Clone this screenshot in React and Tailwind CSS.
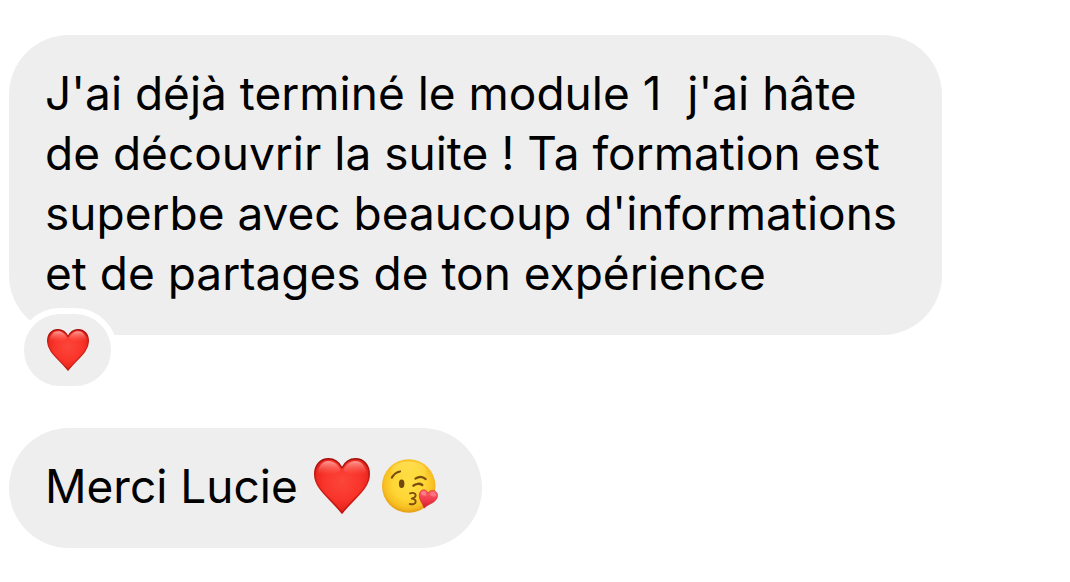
import React from 'react';

const MESSAGES = [
    {
        id: 1,
        text: "J'ai déjà terminé le module 1  j'ai hâte de découvrir la suite ! Ta formation est superbe avec beaucoup d'informations et de partages de ton expérience",
        reaction: true,
    },
    { id: 2, text: 'Merci Lucie', emojis: true },
];

function HeartEmoji({ id, className }) {
    return (
        <svg viewBox="0 0 56 56" className={className} role="img" aria-label="Cœur rouge">
            <defs>
                <radialGradient id={`${id}-fill`} cx="0.5" cy="0.42" r="0.6">
                    <stop offset="0" stopColor="#fb463c" />
                    <stop offset="0.55" stopColor="#fa352b" />
                    <stop offset="0.85" stopColor="#e9261d" />
                    <stop offset="1" stopColor="#cc1711" />
                </radialGradient>
                <linearGradient id={`${id}-edge`} x1="0" y1="0" x2="0" y2="1">
                    <stop offset="0" stopColor="#a3100c" />
                    <stop offset="0.5" stopColor="#d3211a" />
                    <stop offset="1" stopColor="#c0150f" />
                </linearGradient>
                <linearGradient id={`${id}-shine`} x1="0" y1="0" x2="0" y2="1">
                    <stop offset="0" stopColor="#ffb9b2" stopOpacity="0.8" />
                    <stop offset="1" stopColor="#ff6a60" stopOpacity="0" />
                </linearGradient>
            </defs>
            <path
                d="M28 10C25 4 20 .8 14.500 .8C6.500 .8 .8 7 .8 16C.8 31 16 39.500 28 55C40 39.500 55.200 31 55.200 16C55.200 7 49.500 .8 41.500 .8C36 .8 31 4 28 10Z"
                fill={`url(#${id}-fill)`}
                stroke={`url(#${id}-edge)`}
                strokeWidth="1.600"
                strokeLinejoin="round"
            />
            <path d="M3.500 15C4.500 7.500 9 3 14.500 3C20 3 24 6.500 26.500 12.500C20 18 9 18 3.500 15Z" fill={`url(#${id}-shine)`} />
            <path d="M29.500 12.500C32 6.500 36 3 41.500 3C47 3 51.500 7.500 52.500 15C47 18 36 18 29.500 12.500Z" fill={`url(#${id}-shine)`} />
        </svg>
    );
}

function KissEmoji({ className }) {
    return (
        <svg viewBox="0 0 57 56" className={className} role="img" aria-label="Visage envoyant un bisou">
            <defs>
                <radialGradient id="kiss-face" cx="0.5" cy="0.45" r="0.56">
                    <stop offset="0" stopColor="#ffe045" />
                    <stop offset="0.55" stopColor="#fed534" />
                    <stop offset="0.82" stopColor="#f8bf22" />
                    <stop offset="1" stopColor="#e29a15" />
                </radialGradient>
                <linearGradient id="kiss-shine" x1="0" y1="0" x2="0" y2="1">
                    <stop offset="0" stopColor="#ffec70" stopOpacity="0.6" />
                    <stop offset="1" stopColor="#ffe04a" stopOpacity="0" />
                </linearGradient>
                <linearGradient id="kiss-heart" x1="0" y1="0" x2="0" y2="1">
                    <stop offset="0" stopColor="#fb6570" />
                    <stop offset="0.55" stopColor="#f23a4b" />
                    <stop offset="1" stopColor="#cf1f31" />
                </linearGradient>
            </defs>
            <circle cx="27.200" cy="28" r="27.200" fill="url(#kiss-face)" />
            <ellipse cx="27.200" cy="12.500" rx="18" ry="9.500" fill="url(#kiss-shine)" />
            <ellipse cx="20" cy="25.700" rx="2.800" ry="4.300" fill="#70470f" />
            <g fill="none" stroke="#7a4d10" strokeLinecap="round" strokeLinejoin="round">
                <path d="M10 19.500C12 16 15 13.800 18.300 13.200" strokeWidth="2.200" />
                <path d="M34 20.500C37.500 18.200 41.500 18.300 44.500 21" strokeWidth="2.100" />
                <path d="M32 27.700C34.500 25.300 38.500 25.200 41 27" strokeWidth="2.400" />
                <path d="M28.500 35.500C31.500 34.300 34.300 35.200 34.300 37.300C34.300 39.500 32 40.300 30.300 40.900C32.500 41 34.500 42.200 34.300 44.200C34.100 46.500 31 47 28.300 46.300" strokeWidth="1.900" />
            </g>
            <path
                d="M46.500 35.500C48.500 32.500 52 31.500 54.500 33.500C57.300 35.800 57 39.500 54.500 42.500C51.500 46 47 46.500 42.800 50.500C41.500 45.500 37.800 42.500 38 37.500C38.200 33.500 41 31.300 43.500 32C45.200 32.500 46.200 33.700 46.500 35.500Z"
                fill="url(#kiss-heart)"
                stroke="#d32c38"
                strokeWidth="0.700"
            />
            <path d="M39.500 36C40 34 41.500 33 43.300 33.500C44.500 34 45 35.500 45.300 37.500C43 38.500 41 37.500 39.500 36Z" fill="#ff9aa0" opacity="0.6" />
            <path d="M48.500 36.500C50 34 52.200 33.500 54 34.800C55.200 36 55.300 37.200 55 38.500C52.500 39.500 50 38.500 48.500 36.500Z" fill="#ff9aa0" opacity="0.5" />
        </svg>
    );
}

function Message({ message }) {
    return (
        <li className="relative w-fit max-w-[933px] rounded-[60px] bg-[#eeeeee] px-9 pt-7 pb-8">
            <div className="flex items-center">
                <p className="whitespace-pre-wrap">{message.text}</p>
                {message.emojis && (
                    <span className="mr-2 ml-4 flex shrink-0 gap-3">
                        <HeartEmoji id="heart-text" className="size-14" />
                        <KissEmoji className="size-14" />
                    </span>
                )}
            </div>

            {/* Réaction posée sur le bord inférieur de la bulle */}
            {message.reaction && (
                <button
                    type="button"
                    aria-label="Réaction cœur"
                    className="absolute -bottom-[57px] left-[9px] box-content flex h-[72px] w-[87px] items-center justify-center rounded-full border-6 border-white bg-[#eeeeee]"
                >
                    <HeartEmoji id="heart-reaction" className="size-[42px]" />
                </button>
            )}
        </li>
    );
}

export default function App() {
    return (
        <main className="min-h-screen bg-white px-[9px] pt-[35px] pb-[34px] font-['Inter',sans-serif] text-[46px] leading-[60px] text-black">
            <ul className="flex flex-col gap-[93px]">
                {MESSAGES.map((message) => (
                    <Message key={message.id} message={message} />
                ))}
            </ul>
        </main>
    );
}
